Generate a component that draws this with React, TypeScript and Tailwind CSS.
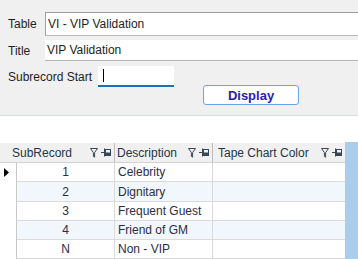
import React from 'react';

const rows = [
  { id: '1', desc: 'Celebrity', h: 'h-[19px]', alt: false, current: true },
  { id: '2', desc: 'Dignitary', h: 'h-[20px]', alt: true, current: false },
  { id: '3', desc: 'Frequent Guest', h: 'h-[19px]', alt: false, current: false },
  { id: '4', desc: 'Friend of GM', h: 'h-[19px]', alt: true, current: false },
  { id: 'N', desc: 'Non - VIP', h: 'h-[19px]', alt: false, current: false },
];

// funnel + pin glyphs drawn in the column headers
function HeaderIcons() {
  return (
    <div className="flex items-center gap-[3px] pr-[3px]">
      <svg width="8" height="10" viewBox="0 0 8 10" className="text-[#3a4654]">
        <path d="M0.5 0.5 H7.5 L4.6 4.6 V9.2 L3.4 8.4 V4.6 Z" fill="none" stroke="currentColor" strokeWidth="1" />
      </svg>
      <svg width="10" height="9" viewBox="0 0 10 9" className="text-[#3a4654]">
        <path d="M0 4.5 H3.5" stroke="currentColor" strokeWidth="1" />
        <path d="M3.5 0.5 V8.5" stroke="currentColor" strokeWidth="1" />
        <rect x="4.5" y="1.5" width="5" height="6" fill="none" stroke="currentColor" strokeWidth="1" />
        <rect x="4.5" y="4.5" width="5" height="3" fill="currentColor" />
      </svg>
    </div>
  );
}

export default function App() {
  return (
    <div
      className="w-[358px] h-[259px] overflow-hidden bg-white text-[12px] text-[#1e1e1e]"
      style={{ fontFamily: '"Liberation Sans", Arial, sans-serif' }}
    >
      {/* Header form panel */}
      <div className="h-[116px] bg-[#f0f0f0] border-b border-[#d6e0ea] pt-[12px]">
        <div className="flex items-center h-[24px]">
          <span className="w-[45px] pl-[8px] shrink-0">Table</span>
          <div className="flex-1 h-[24px] bg-white border-t border-l border-[#a0a0a0] border-b border-b-[#b9b9b9] flex items-center pl-[2px]">
            VI - VIP Validation
          </div>
        </div>
        <div className="flex items-center h-[21px] mt-[4px]">
          <span className="w-[45px] pl-[8px] shrink-0">Title</span>
          <div className="flex-1 h-[21px] bg-white border-b border-[#b4b4b4] flex items-center pl-[2px]">
            VIP Validation
          </div>
        </div>
        <div className="flex items-start mt-[5px]">
          <span className="w-[98px] pl-[8px] shrink-0 h-[21px] flex items-center">Subrecord Start</span>
          <div className="w-[76px] h-[21px] bg-white border-b-2 border-[#1a6fc0] flex items-center pl-[5px]">
            <span className="w-px h-[13px] bg-black" />
          </div>
          <button className="ml-[29px] mt-[19px] w-[96px] h-[20px] bg-white border border-[#6aa6e4] rounded-[3px] text-[13px] font-bold text-[#2a1db0] leading-none flex items-center justify-center">
            Display
          </button>
        </div>
      </div>

      {/* Grid */}
      <div className="flex mt-[27px]">
        <div className="w-[345px]">
          <div className="flex h-[20px] bg-[#f0f0f0] border-b border-[#d2d2d2] text-[#24364a]">
            <div className="w-[115px] flex items-center justify-between pl-[12px] border-r border-[#bdbdbd]">
              <span>SubRecord</span>
              <HeaderIcons />
            </div>
            <div className="w-[98px] flex items-center justify-between pl-[2px] border-r border-[#bdbdbd]">
              <span>Description</span>
              <HeaderIcons />
            </div>
            <div className="w-[132px] flex items-center justify-between pl-[5px]">
              <span>Tape Chart Color</span>
              <HeaderIcons />
            </div>
          </div>
          {rows.map((r) => (
            <div key={r.id} className={`flex ${r.h}`}>
              <div className="w-[17px] bg-white border-r border-[#c8c8c8] flex items-center pl-[4px]">
                {r.current && (
                  <svg width="5" height="9" viewBox="0 0 5 9">
                    <path d="M0 0 L5 4.5 L0 9 Z" fill="#000" />
                  </svg>
                )}
              </div>
              <div
                className={`flex flex-1 border-b border-[#dadada] text-[#2c2c48] ${r.alt ? 'bg-[#f1f7fd]' : 'bg-white'}`}
              >
                <div className="w-[98px] flex items-center justify-center border-r border-[#dadada]">{r.id}</div>
                <div className="w-[98px] flex items-center pl-[3px] border-r border-[#dadada]">{r.desc}</div>
                <div className="w-[132px]" />
              </div>
            </div>
          ))}
        </div>
        <div className="w-[13px] -mt-px bg-[#abcdec]" />
      </div>
    </div>
  );
}
